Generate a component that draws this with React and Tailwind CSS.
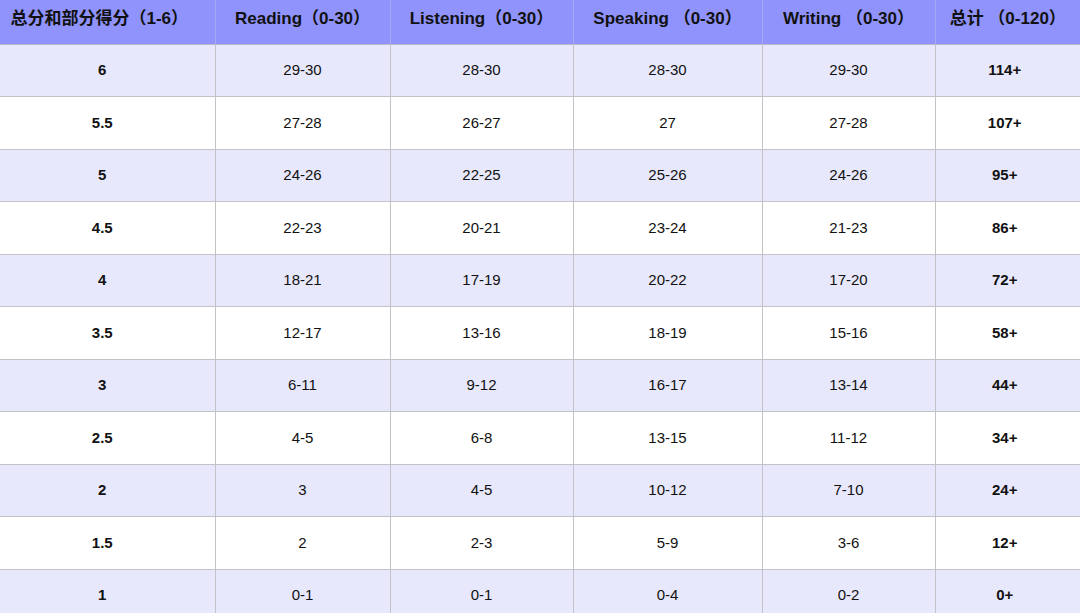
import React from "react";

const headers = [
  "总分和部分得分（1-6）",
  "Reading（0-30）",
  "Listening（0-30）",
  "Speaking （0-30）",
  "Writing （0-30）",
  "总计 （0-120）",
];

const widths = ["w-[215px]", "w-[175px]", "w-[183px]", "w-[189px]", "w-[173px]", "w-[145px]"];

const rows = [
  ["6", "29-30", "28-30", "28-30", "29-30", "114+"],
  ["5.5", "27-28", "26-27", "27", "27-28", "107+"],
  ["5", "24-26", "22-25", "25-26", "24-26", "95+"],
  ["4.5", "22-23", "20-21", "23-24", "21-23", "86+"],
  ["4", "18-21", "17-19", "20-22", "17-20", "72+"],
  ["3.5", "12-17", "13-16", "18-19", "15-16", "58+"],
  ["3", "6-11", "9-12", "16-17", "13-14", "44+"],
  ["2.5", "4-5", "6-8", "13-15", "11-12", "34+"],
  ["2", "3", "4-5", "10-12", "7-10", "24+"],
  ["1.5", "2", "2-3", "5-9", "3-6", "12+"],
  ["1", "0-1", "0-1", "0-4", "0-2", "0+"],
];

export default function App() {
  return (
    <div
      className="w-[1080px] h-[613px] overflow-hidden bg-white text-[#111]"
      style={{ fontFamily: '"Liberation Sans", Arial, "Noto Sans CJK SC", sans-serif' }}
    >
      <table className="w-[1080px] table-fixed border-collapse">
        <thead>
          <tr className="h-[44px] bg-[#8f93fb]">
            {headers.map((h, i) => (
              <th
                key={i}
                className={`${widths[i]} border-b border-[#b9b9c8] ${
                  i > 0 ? "border-l border-l-[#a5a8f0]" : "pr-[16px]"
                } text-center align-top pt-[6px] text-[17px] font-bold text-[#111] whitespace-nowrap`}
              >
                {h}
              </th>
            ))}
          </tr>
        </thead>
        <tbody>
          {rows.map((r, ri) => (
            <tr
              key={ri}
              className={`h-[52.5px] ${ri % 2 === 0 ? "bg-[#e8e8fc]" : "bg-white"}`}
            >
              {r.map((c, ci) => (
                <td
                  key={ci}
                  className={`border-b border-[#c2c2c8] ${
                    ci > 0 ? "border-l" : "pr-[10px]"
                  } ${ci === 5 ? "pr-[6px]" : ""} text-center text-[15px] ${
                    ci === 0 || ci === 5 ? "font-bold" : ""
                  }`}
                >
                  {c}
                </td>
              ))}
            </tr>
          ))}
        </tbody>
      </table>
    </div>
  );
}
